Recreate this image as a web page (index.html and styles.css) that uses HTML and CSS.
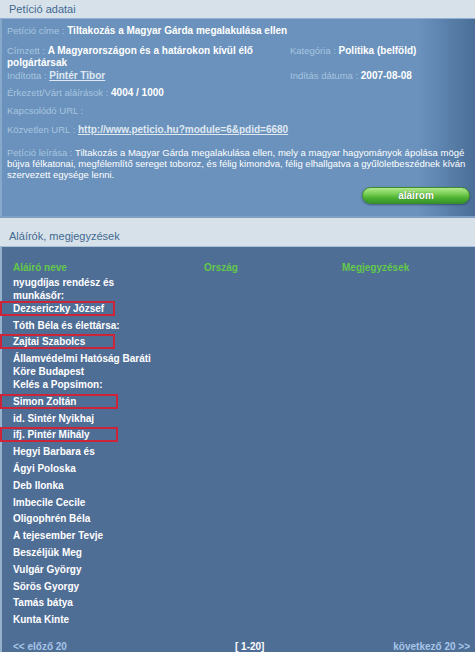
FILE: index.html
```html
<!DOCTYPE html>
<html lang="hu">
<head>
<meta charset="utf-8">
<title>Petíció adatai</title>
<link rel="stylesheet" href="styles.css">
</head>
<body>
<div class="page">
  <div class="sect-title">Petíció adatai</div>
  <div class="details">
    <div class="drow r1"><span class="lbl">Petíció címe : </span><b class="val">Tiltakozás a Magyar Gárda megalakulása ellen</b></div>
    <div class="dgrid r2">
      <div class="cell"><span class="lbl">Címzett : </span><b class="val">A Magyarországon és a határokon kívül élő polgártársak</b></div>
      <div class="cell"><span class="lbl">Kategória : </span><b class="val">Politika (belföld)</b></div>
    </div>
    <div class="dgrid r3">
      <div class="cell"><span class="lbl">Indította : </span><a class="lnk" href="#">Pintér Tibor</a></div>
      <div class="cell"><span class="lbl">Indítás dátuma : </span><b class="val">2007-08-08</b></div>
    </div>
    <div class="drow r4"><span class="lbl">Érkezett/Várt aláírások : </span><b class="val">4004 / 1000</b></div>
    <div class="drow r5"><span class="lbl">Kapcsolódó URL : </span></div>
    <div class="drow r6"><span class="lbl">Közvetlen URL : </span><a class="lnk" href="#">http://www.peticio.hu?module=6&amp;pdid=6680</a></div>
    <div class="desc"><span class="lbl">Petíció leírása : </span>Tiltakozás a Magyar Gárda megalakulása ellen, mely a magyar hagyományok ápolása mögé bújva félkatonai, megfélemlítő sereget toboroz, és félig kimondva, félig elhallgatva a gyűlöletbeszédnek kíván szervezett egysége lenni.</div>
    <div class="btn-row"><a class="btn" href="#">aláírom</a></div>
  </div>

  <div class="sect-title second">Aláírók, megjegyzések</div>
  <div class="signers">
    <div class="srow head">
      <div class="name">Aláíró neve</div>
      <div class="country">Ország</div>
      <div class="note">Megjegyzések</div>
    </div>
    <div class="srow">
      <div class="name"><div>nyugdíjas rendész és</div><div>munkásőr:</div><div class="mark">Dezsericzky József</div></div>
      <div class="country"></div><div class="note"></div>
    </div>
    <div class="srow"><div class="name"><div>Tóth Béla és élettársa:</div></div><div class="country"></div><div class="note"></div></div>
    <div class="srow"><div class="name"><div class="mark">Zajtai Szabolcs</div></div><div class="country"></div><div class="note"></div></div>
    <div class="srow"><div class="name"><div>Államvédelmi Hatóság Baráti</div><div>Köre Budapest</div><div>Kelés a Popsimon:</div></div><div class="country"></div><div class="note"></div></div>
    <div class="srow"><div class="name"><div class="mark wide">Simon Zoltán</div></div><div class="country"></div><div class="note"></div></div>
    <div class="srow"><div class="name"><div>id. Sintér Nyikhaj</div></div><div class="country"></div><div class="note"></div></div>
    <div class="srow"><div class="name"><div class="mark wide">ifj. Pintér Mihály</div></div><div class="country"></div><div class="note"></div></div>
    <div class="srow"><div class="name"><div>Hegyi Barbara és</div></div><div class="country"></div><div class="note"></div></div>
    <div class="srow"><div class="name"><div>Ágyi Poloska</div></div><div class="country"></div><div class="note"></div></div>
    <div class="srow"><div class="name"><div>Deb Ilonka</div></div><div class="country"></div><div class="note"></div></div>
    <div class="srow"><div class="name"><div>Imbecile Cecile</div></div><div class="country"></div><div class="note"></div></div>
    <div class="srow"><div class="name"><div>Oligophrén Béla</div></div><div class="country"></div><div class="note"></div></div>
    <div class="srow"><div class="name"><div>A tejesember Tevje</div></div><div class="country"></div><div class="note"></div></div>
    <div class="srow"><div class="name"><div>Beszéljük Meg</div></div><div class="country"></div><div class="note"></div></div>
    <div class="srow"><div class="name"><div>Vulgár György</div></div><div class="country"></div><div class="note"></div></div>
    <div class="srow"><div class="name"><div>Sörös Gyorgy</div></div><div class="country"></div><div class="note"></div></div>
    <div class="srow"><div class="name"><div>Tamás bátya</div></div><div class="country"></div><div class="note"></div></div>
    <div class="srow"><div class="name"><div>Kunta Kinte</div></div><div class="country"></div><div class="note"></div></div>
    <div class="pager">
      <a class="prev" href="#">&lt;&lt; előző 20</a>
      <span class="range">[ 1-20]</span>
      <a class="next" href="#">következő 20 &gt;&gt;</a>
    </div>
  </div>
</div>
</body>
</html>
```

FILE: styles.css
```css
html, body {
  margin: 0;
  padding: 0;
}
body {
  width: 475px;
  height: 652px;
  overflow: hidden;
  background: #d7e1e9;
  font-family: "Liberation Sans", Arial, sans-serif;
}
.page {
  width: 475px;
}
.sect-title {
  height: 18px;
  line-height: 18px;
  padding-left: 9px;
  font-size: 11px;
  color: #426a92;
  background: #d7e1e9;
}
.sect-title.second {
  height: 30px;
  line-height: 18px;
  display: flex;
  align-items: flex-end;
  padding-bottom: 1px;
  box-sizing: border-box;
  border-top: 2px solid #7e9fc2;
}
.details {
  background: linear-gradient(90deg, #6a92bc 0%, #6a92bc 88%, #5d84ae 93%, #4a6e98 100%);
  border-top: 1px solid #8fb1d2;
  border-left: 2px solid #86a8ca;
  padding: 6px 5px 12px 5px;
  font-size: 9.5px;
  line-height: 12px;
  color: #ffffff;
}
.lbl {
  color: #a8c5e0;
}
.val {
  font-size: 10px;
  font-weight: bold;
  color: #ffffff;
}
.lnk {
  font-size: 10px;
  font-weight: bold;
  color: #dfe8f1;
  text-decoration: underline;
}
.drow {
  height: 12px;
}
.dgrid {
  display: grid;
  grid-template-columns: 283px 1fr;
}
.r2 { margin-top: 8px; }
.r3 { margin-top: 1px; }
.r4 { margin-top: 5px; }
.r5 { margin-top: 6px; }
.r6 { margin-top: 7px; }
.desc {
  margin-top: 11px;
  line-height: 11px;
  color: #ffffff;
  padding-right: 3px;
}
.btn-row {
  display: flex;
  justify-content: flex-end;
  margin-top: 7px;
}
.btn {
  display: block;
  width: 108px;
  height: 17px;
  line-height: 16px;
  box-sizing: border-box;
  border-radius: 9px;
  border: 1px solid #3f8a2c;
  background: linear-gradient(180deg, #b2e98e 0%, #7fd25a 35%, #4fb232 65%, #35962a 100%);
  box-shadow: 0 1px 2px rgba(20, 40, 70, 0.5);
  color: #ffffff;
  font-size: 10px;
  font-weight: bold;
  text-align: center;
  text-decoration: none;
  text-shadow: 0 0 1px #2d6a1e;
}
.signers {
  background: #4f6e96;
  border-left: 2px solid #95b1cc;
  border-top: 1px solid #a9c2d8;
  padding: 12px 0 0 11px;
  font-size: 10px;
  font-weight: bold;
  color: #ffffff;
}
.srow {
  display: flex;
  padding: 1.9px 0;
  line-height: 13px;
}
.srow.head {
  color: #62c94a;
  padding-bottom: 0;
}
.name {
  width: 191px;
  flex: none;
}
.country {
  width: 138px;
  flex: none;
}
.note {
  flex: 1;
}
.mark {
  position: relative;
}
.mark::after {
  content: "";
  position: absolute;
  left: -13px;
  top: -1px;
  width: 115px;
  height: 15px;
  box-sizing: border-box;
  border: 2px solid #cc2438;
}
.mark.wide::after {
  width: 118px;
}
.pager {
  display: flex;
  margin-top: 12px;
  line-height: 13px;
  padding-right: 5px;
}
.pager a {
  color: #a6c6e8;
  text-decoration: none;
}
.prev {
  width: 222px;
}
.range {
  color: #ffffff;
}
.next {
  margin-left: auto;
}
```
